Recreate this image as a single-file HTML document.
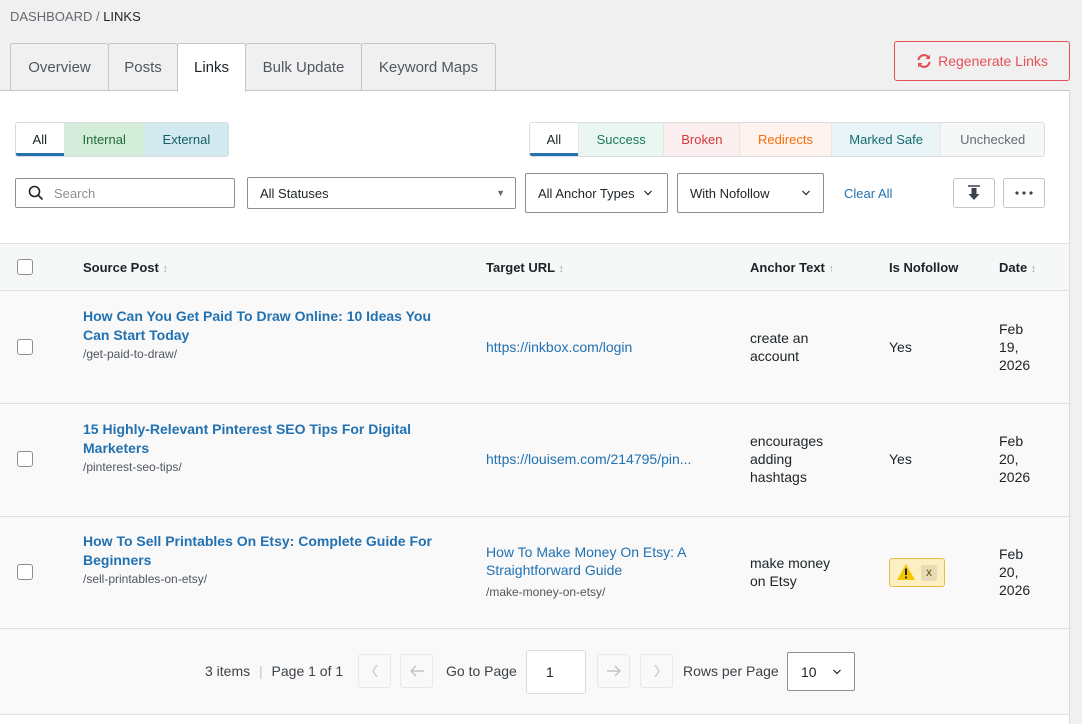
<!DOCTYPE html>
<html><head><meta charset="utf-8"><style>
*{box-sizing:border-box;margin:0;padding:0}
body{width:1082px;height:724px;background:#f0f0f1;font-family:"Liberation Sans",sans-serif;font-size:14px;color:#1d2327;position:relative;overflow:hidden}
.a{position:absolute}
.bc{left:10px;top:9px;font-size:13px;color:#646970}
.bc b{font-weight:normal;color:#1d2327}
.tab{top:43px;height:48px;border:1px solid #c3c4c7;background:#f0f0f1;color:#50575e;font-size:15px;display:flex;align-items:center;justify-content:center;border-radius:3px 3px 0 0}
.panel{left:0;top:90px;width:1070px;height:634px;background:#fff;border-top:1px solid #c3c4c7;border-right:1px solid #dcdcde}
.regen{left:894px;top:41px;width:176px;height:40px;border:1px solid #e65054;border-radius:3px;color:#e65054;font-size:14px;display:flex;align-items:center;justify-content:center;gap:6px;background:#f0f0f1}
.grp{display:flex;border:1px solid #dcdcde;border-radius:3px;height:35px;overflow:hidden}
.grp div{display:flex;align-items:center;justify-content:center;font-size:13px;border-right:1px solid #e6e6e6}
.grp .on{background:#fff;box-shadow:inset 0 -3px 0 #2271b1;color:#1d2327}
.inp{border:1px solid #8c8f94;border-radius:2px;background:#fff;display:flex;align-items:center;font-size:13px;padding-left:12px}
.ib{border:1px solid #c3c4c7;border-radius:3px;background:#fff;display:flex;align-items:center;justify-content:center}
.th{left:0;top:243px;width:1069px;height:48px;background:#f6f7f7;border-top:1px solid #e0e0e0;border-bottom:1px solid #e0e0e0}
.h{top:260px;font-size:13px;font-weight:bold}
.h span{color:#a7aaad;font-weight:normal;font-size:11px}
.row{left:0;width:1069px;height:113px;background:#f9f9f9;border-bottom:1px solid #e0e0e0}
.cb{width:16px;height:16px;border:1px solid #8c8f94;border-radius:3px;background:#fff}
.t{color:#2271b1;font-weight:bold;font-size:14px;line-height:19px}
.s{color:#50575e;font-size:12px;line-height:18px}
.l{color:#2271b1;font-size:14px;line-height:18px}
.tx{font-size:14px;line-height:18px}
.ft{left:0;top:629px;width:1069px;height:86px;background:#f9f9f9;border-bottom:1px solid #e0e0e0}
.pb{top:654px;width:33px;height:34px;border:1px solid #e8e8e8;border-radius:3px;display:flex;align-items:center;justify-content:center}
</style></head><body>
<div class="a bc">DASHBOARD / <b>LINKS</b></div>
<div class="a panel"></div>
<div class="a tab" style="left:10px;width:99px">Overview</div>
<div class="a tab" style="left:108px;width:70px">Posts</div>
<div class="a tab" style="left:177px;width:69px;background:#fff;border-bottom-color:#fff;color:#1d2327;height:49px">Links</div>
<div class="a tab" style="left:245px;width:117px">Bulk Update</div>
<div class="a tab" style="left:361px;width:135px">Keyword Maps</div>
<div class="a regen"><svg width="16" height="16" viewBox="0 0 16 16"><path d="M2.5 7A5.5 5.5 0 0 1 12.5 4.5M13.5 9A5.5 5.5 0 0 1 3.5 11.5" stroke="#e65054" stroke-width="2.2" fill="none"/><path d="M14 1.5v4.5h-4.5z M2 14.5v-4.5h4.5z" fill="#e65054"/></svg>Regenerate Links</div>

<div class="a grp" style="left:15px;top:122px;width:214px">
<div class="on" style="width:49px">All</div><div style="width:81px;background:#d4edda;color:#1e6b30">Internal</div><div style="width:84px;background:#d1e9ef;color:#135e66;border:0">External</div></div>
<div class="a grp" style="left:529px;top:122px;width:516px">
<div class="on" style="width:49px">All</div><div style="width:86px;background:#e9f6f1;color:#1a7a57">Success</div><div style="width:76px;background:#fcefef;color:#d63638">Broken</div><div style="width:92px;background:#fef3ee;color:#f56e0a">Redirects</div><div style="width:110px;background:#e8f4f6;color:#136b73">Marked Safe</div><div style="width:103px;background:#f6f7f7;color:#646970;border:0">Unchecked</div></div>

<div class="a inp" style="left:15px;top:178px;width:220px;height:30px;color:#8c8f94"><svg width="16" height="16" viewBox="0 0 16 16" style="margin-right:10px"><circle cx="6.5" cy="6.5" r="5" stroke="#1d2327" stroke-width="1.6" fill="none"/><path d="M10 10l4.5 4.5" stroke="#1d2327" stroke-width="1.6"/></svg>Search</div>
<div class="a inp" style="left:247px;top:177px;width:269px;height:32px">All Statuses<span style="position:absolute;right:10px;font-size:9px;color:#646970">▼</span></div>
<div class="a inp" style="left:525px;top:173px;width:143px;height:40px">All Anchor Types<svg style="margin-left:8px" width="10" height="6" viewBox="0 0 10 6"><path d="M1.5 1l3.5 3.5 3.5-3.5" stroke="#1d2327" stroke-width="1.2" fill="none"/></svg></div>
<div class="a inp" style="left:677px;top:173px;width:147px;height:40px">With Nofollow<svg style="position:absolute;right:12px" width="10" height="6" viewBox="0 0 10 6"><path d="M1.5 1l3.5 3.5 3.5-3.5" stroke="#1d2327" stroke-width="1.2" fill="none"/></svg></div>
<div class="a" style="left:844px;top:186px;font-size:13px;color:#2271b1">Clear All</div>
<div class="a ib" style="left:953px;top:178px;width:42px;height:30px"><svg width="14" height="16" viewBox="0 0 14 16"><path d="M1 1h12" stroke="#3c434a" stroke-width="1.5"/><path d="M4.5 3h5v6h3l-5.5 6-5.5-6h3z" fill="#3c434a"/></svg></div>
<div class="a ib" style="left:1003px;top:178px;width:42px;height:30px"><svg width="18" height="4" viewBox="0 0 18 4"><circle cx="2" cy="2" r="1.6" fill="#3c434a"/><circle cx="9" cy="2" r="1.6" fill="#3c434a"/><circle cx="16" cy="2" r="1.6" fill="#3c434a"/></svg></div>

<div class="a th"></div>
<div class="a cb" style="left:17px;top:259px"></div>
<div class="a h" style="left:83px">Source Post <span>↕</span></div>
<div class="a h" style="left:486px">Target URL <span>↕</span></div>
<div class="a h" style="left:750px">Anchor Text <span>↑</span></div>
<div class="a h" style="left:889px">Is Nofollow</div>
<div class="a h" style="left:999px">Date <span>↕</span></div>

<div class="a row" style="top:291px"></div>
<div class="a cb" style="left:17px;top:339px"></div>
<div class="a" style="left:83px;top:307px;width:370px"><div class="t">How Can You Get Paid To Draw Online: 10 Ideas You Can Start Today</div><div class="s">/get-paid-to-draw/</div></div>
<div class="a l" style="left:486px;top:338px">https://inkbox.com/login</div>
<div class="a tx" style="left:750px;top:329px">create an<br>account</div>
<div class="a tx" style="left:889px;top:338px">Yes</div>
<div class="a tx" style="left:999px;top:320px">Feb<br>19,<br>2026</div>

<div class="a row" style="top:404px"></div>
<div class="a cb" style="left:17px;top:451px"></div>
<div class="a" style="left:83px;top:420px;width:370px"><div class="t">15 Highly-Relevant Pinterest SEO Tips For Digital Marketers</div><div class="s">/pinterest-seo-tips/</div></div>
<div class="a l" style="left:486px;top:450px">https://louisem.com/214795/pin...</div>
<div class="a tx" style="left:750px;top:432px">encourages<br>adding<br>hashtags</div>
<div class="a tx" style="left:889px;top:450px">Yes</div>
<div class="a tx" style="left:999px;top:432px">Feb<br>20,<br>2026</div>

<div class="a row" style="top:517px;height:112px"></div>
<div class="a cb" style="left:17px;top:564px"></div>
<div class="a" style="left:83px;top:532px;width:370px"><div class="t">How To Sell Printables On Etsy: Complete Guide For Beginners</div><div class="s">/sell-printables-on-etsy/</div></div>
<div class="a" style="left:486px;top:543px;width:230px"><div class="l">How To Make Money On Etsy: A Straightforward Guide</div><div class="s" style="margin-top:4px">/make-money-on-etsy/</div></div>
<div class="a tx" style="left:750px;top:554px">make money<br>on Etsy</div>
<div class="a" style="left:889px;top:558px;width:56px;height:29px;border:1px solid #f0b849;background:#fcf0c3;border-radius:3px">
<svg style="position:absolute;left:6px;top:4px" width="20" height="18" viewBox="0 0 20 18"><path d="M10 1L19 17H1z" fill="#f7c600"/><path d="M10 5.5v6.5" stroke="#1d2327" stroke-width="2"/><circle cx="10" cy="14.5" r="1.1" fill="#1d2327"/></svg>
<span style="position:absolute;left:31px;top:6px;width:16px;height:16px;background:#e6dcb6;border-radius:2px;font-size:12px;text-align:center;line-height:15px;color:#6b5300">x</span></div>
<div class="a tx" style="left:999px;top:545px">Feb<br>20,<br>2026</div>

<div class="a ft"></div>
<div class="a" style="left:205px;top:663px;font-size:14px;color:#3c434a">3 items <span style="color:#c3c4c7;margin:0 5px">|</span> Page 1 of 1</div>
<div class="a pb" style="left:358px"><svg width="8" height="14" viewBox="0 0 8 14"><path d="M6 1L2 7l4 6" stroke="#ccc" stroke-width="1.3" fill="none"/></svg></div>
<div class="a pb" style="left:400px"><svg width="16" height="14" viewBox="0 0 16 14"><path d="M15 7H2M7 2L2 7l5 5" stroke="#c3c4c7" stroke-width="1.5" fill="none"/></svg></div>
<div class="a" style="left:446px;top:663px;color:#3c434a">Go to Page</div>
<div class="a" style="left:526px;top:650px;width:60px;height:44px;background:#fff;border:1px solid #dcdcde;border-radius:3px;padding:13px 0 0 19px">1</div>
<div class="a pb" style="left:597px"><svg width="16" height="14" viewBox="0 0 16 14"><path d="M1 7h13M9 2l5 5-5 5" stroke="#c3c4c7" stroke-width="1.5" fill="none"/></svg></div>
<div class="a pb" style="left:640px"><svg width="8" height="14" viewBox="0 0 8 14"><path d="M2 1l4 6-4 6" stroke="#ccc" stroke-width="1.3" fill="none"/></svg></div>
<div class="a" style="left:683px;top:663px;color:#3c434a">Rows per Page</div>
<div class="a" style="left:787px;top:652px;width:68px;height:39px;background:#fff;border:1px solid #8c8f94;border-radius:2px;padding:11px 0 0 13px">10<svg style="position:absolute;right:12px;top:16px" width="10" height="6" viewBox="0 0 10 6"><path d="M1.5 1l3.5 3.5 3.5-3.5" stroke="#1d2327" stroke-width="1.2" fill="none"/></svg></div>
</body></html>
